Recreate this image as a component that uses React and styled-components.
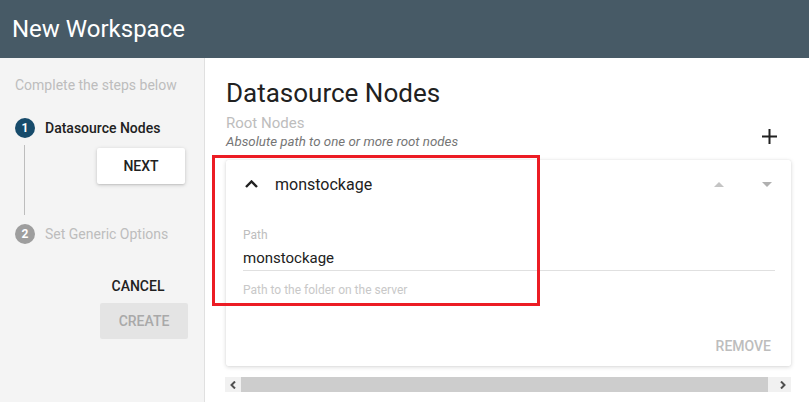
import React from "react";
import styled, { createGlobalStyle } from "styled-components";

const GlobalStyle = createGlobalStyle`
  html, body {
    margin: 0;
    padding: 0;
    background: #ffffff;
  }
  body {
    font-family: Roboto, "Liberation Sans", Arial, sans-serif;
    color: #212121;
  }
  * {
    box-sizing: border-box;
  }
`

const Page = styled.div`
  position: relative;
  width: 809px;
  height: 402px;
  display: flex;
  flex-direction: column;
  overflow: hidden;
`

const TopBar = styled.header`
  height: 58px;
  flex-shrink: 0;
  background: #475a66;
  display: flex;
  align-items: center;
  padding-left: 12px;
`

const TopTitle = styled.h1`
  margin: 0;
  font-size: 24px;
  font-weight: 400;
  color: #ffffff;
`

const Body = styled.div`
  flex: 1;
  display: flex;
`

const Sidebar = styled.aside`
  width: 205px;
  flex-shrink: 0;
  background: #f4f4f4;
  border-right: 1px solid #e0e0e0;
  padding: 19px 0 0 15px;
`

const SideHint = styled.div`
  font-size: 14px;
  line-height: 16px;
  color: #bdbdbd;
`

const StepRow = styled.div`
  display: flex;
  align-items: center;
  margin-top: ${(p) => p.$top}px;
  height: 20px;
`

const StepBadge = styled.span`
  width: 20px;
  height: 20px;
  border-radius: 50%;
  background: ${(p) => (p.$active ? "#174b6b" : "#9e9e9e")};
  color: #ffffff;
  font-size: 12px;
  font-weight: 700;
  display: flex;
  align-items: center;
  justify-content: center;
`

const StepLabel = styled.span`
  margin-left: 10px;
  font-size: 14px;
  font-weight: ${(p) => (p.$active ? 500 : 400)};
  color: ${(p) => (p.$active ? "#212121" : "#bdbdbd")};
`

const StepBody = styled.div`
  display: flex;
  height: 86px;
`

const StepRail = styled.div`
  width: 20px;
  display: flex;
  justify-content: center;
  padding: 7px 0 9px;

  &::before {
    content: "";
    width: 1px;
    background: #bdbdbd;
    margin-right: 1px;
  }
`

const RaisedButton = styled.button`
  width: 88px;
  height: 36px;
  margin: 10px 0 0 62px;
  border: none;
  border-radius: 2px;
  background: #ffffff;
  box-shadow: 0 1px 4px rgba(0, 0, 0, 0.16), 0 1px 2px rgba(0, 0, 0, 0.1);
  font-family: inherit;
  font-size: 14px;
  font-weight: 500;
  color: #212121;
`

const SideActions = styled.div`
  display: flex;
  flex-direction: column;
  margin: 27px 0 0 85px;
`

const FlatButton = styled.button`
  width: 76px;
  height: 30px;
  padding: 0;
  border: none;
  background: transparent;
  font-family: inherit;
  font-size: 14px;
  font-weight: 500;
  color: #212121;
`

const DisabledButton = styled.button`
  width: 88px;
  height: 36px;
  margin-top: 2px;
  border: none;
  border-radius: 2px;
  background: #e4e4e4;
  font-family: inherit;
  font-size: 14px;
  font-weight: 500;
  color: #a9a9a9;
`

const Main = styled.main`
  flex: 1;
  display: flex;
  flex-direction: column;
  padding: 18px 18px 0 21px;
`

const HeadRow = styled.div`
  display: flex;
  justify-content: space-between;
  align-items: flex-end;
`

const Heading = styled.h2`
  margin: 0;
  font-size: 26px;
  line-height: 34px;
  font-weight: 400;
  color: #212121;
`

const FieldTitle = styled.div`
  margin-top: 4px;
  font-size: 15px;
  line-height: 18px;
  color: #bdbdbd;
`

const FieldHint = styled.div`
  margin-top: 2px;
  font-size: 13.3px;
  line-height: 16px;
  font-style: italic;
  color: #757575;
`

const AddButton = styled.button`
  border: none;
  background: transparent;
  padding: 0;
  margin: 0 14px 6px 0;
  display: flex;
`

const Card = styled.section`
  margin-top: 10px;
  background: #ffffff;
  border-radius: 2px;
  box-shadow: 0 1px 4px rgba(0, 0, 0, 0.16), 0 0 1px rgba(0, 0, 0, 0.12);
  padding-bottom: 2px;
`

const CardHead = styled.div`
  height: 48px;
  display: flex;
  align-items: center;
  padding-left: 19px;
`

const CardTitle = styled.span`
  margin-left: 17px;
  flex: 1;
  font-size: 16px;
  color: #212121;
`

const OrderButton = styled.button`
  width: 48px;
  height: 48px;
  border: none;
  background: transparent;
  padding: 0;
  display: flex;
  align-items: center;
  justify-content: center;
`

const CardBody = styled.div`
  padding: 20px 16px 0 17px;
`

const InputLabel = styled.div`
  font-size: 12px;
  line-height: 14px;
  color: #bdbdbd;
`

const InputValue = styled.div`
  margin-top: 6px;
  font-size: 15px;
  line-height: 20px;
  padding-bottom: 2px;
  border-bottom: 1px solid #e0e0e0;
  color: #212121;
`

const InputHelp = styled.div`
  margin-top: 12px;
  font-size: 12px;
  line-height: 14px;
  color: #c8c8c8;
`

const CardFoot = styled.div`
  display: flex;
  justify-content: flex-end;
  margin-top: 31px;
`

const RemoveButton = styled.button`
  height: 36px;
  padding: 0 20px;
  border: none;
  background: transparent;
  font-family: inherit;
  font-size: 14px;
  font-weight: 500;
  color: #bdbdbd;
`

const ScrollTrack = styled.div`
  margin: 11px 0 0 -1px;
  height: 15px;
  display: flex;
  background: #f1f1f1;
`

const ScrollArrow = styled.div`
  width: ${(p) => p.$w}px;
  display: flex;
  align-items: center;
  justify-content: ${(p) => (p.$end ? "flex-end" : "center")};
  padding-right: ${(p) => (p.$end ? 5 : 0)}px;
`

const ScrollThumb = styled.div`
  flex: 1;
  background: #cdcdcd;
`

const Callout = styled.div`
  position: absolute;
  left: 212px;
  top: 155px;
  width: 328px;
  height: 151px;
  border: 3px solid #ec1c24;
  pointer-events: none;
`

const Triangle = ({ up }) => (
  <svg width="10" height="5" viewBox="0 0 10 5">
    <path d={up ? "M0 5 L5 0 L10 5 Z" : "M0 0 L5 5 L10 0 Z"} fill={up ? "#c4c4c4" : "#b0b0b0"} />
  </svg>
);

export default function App() {
  return (
    <>
      <GlobalStyle />
      <Page>
        <TopBar>
          <TopTitle>New Workspace</TopTitle>
        </TopBar>
        <Body>
          <Sidebar>
            <SideHint>Complete the steps below</SideHint>
            <StepRow $top={25}>
              <StepBadge $active>1</StepBadge>
              <StepLabel $active>Datasource Nodes</StepLabel>
            </StepRow>
            <StepBody>
              <StepRail />
              <div>
                <RaisedButton>NEXT</RaisedButton>
              </div>
            </StepBody>
            <StepRow $top={0}>
              <StepBadge>2</StepBadge>
              <StepLabel>Set Generic Options</StepLabel>
            </StepRow>
            <SideActions>
              <FlatButton>CANCEL</FlatButton>
              <DisabledButton disabled>CREATE</DisabledButton>
            </SideActions>
          </Sidebar>

          <Main>
            <HeadRow>
              <div>
                <Heading>Datasource Nodes</Heading>
                <FieldTitle>Root Nodes</FieldTitle>
                <FieldHint>Absolute path to one or more root nodes</FieldHint>
              </div>
              <AddButton aria-label="add">
                <svg width="15" height="15" viewBox="0 0 15 15">
                  <path d="M7.5 0 V15 M0 7.5 H15" stroke="#212121" strokeWidth="2" />
                </svg>
              </AddButton>
            </HeadRow>

            <Card>
              <CardHead>
                <svg width="13" height="8" viewBox="0 0 13 8">
                  <path d="M1 7 L6.5 1.5 L12 7" fill="none" stroke="#212121" strokeWidth="2.4" />
                </svg>
                <CardTitle>monstockage</CardTitle>
                <OrderButton aria-label="move up">
                  <Triangle up />
                </OrderButton>
                <OrderButton aria-label="move down">
                  <Triangle />
                </OrderButton>
              </CardHead>
              <CardBody>
                <InputLabel>Path</InputLabel>
                <InputValue>monstockage</InputValue>
                <InputHelp>Path to the folder on the server</InputHelp>
              </CardBody>
              <CardFoot>
                <RemoveButton>REMOVE</RemoveButton>
              </CardFoot>
            </Card>

            <ScrollTrack>
              <ScrollArrow $w={16}>
                <svg width="6" height="8" viewBox="0 0 6 8">
                  <path d="M5 0.5 L1.5 4 L5 7.5" fill="none" stroke="#505050" strokeWidth="2" />
                </svg>
              </ScrollArrow>
              <ScrollThumb />
              <ScrollArrow $w={23} $end>
                <svg width="6" height="8" viewBox="0 0 6 8">
                  <path d="M1 0.5 L4.5 4 L1 7.5" fill="none" stroke="#505050" strokeWidth="2" />
                </svg>
              </ScrollArrow>
            </ScrollTrack>
          </Main>
        </Body>
        <Callout />
      </Page>
    </>
  );
}
